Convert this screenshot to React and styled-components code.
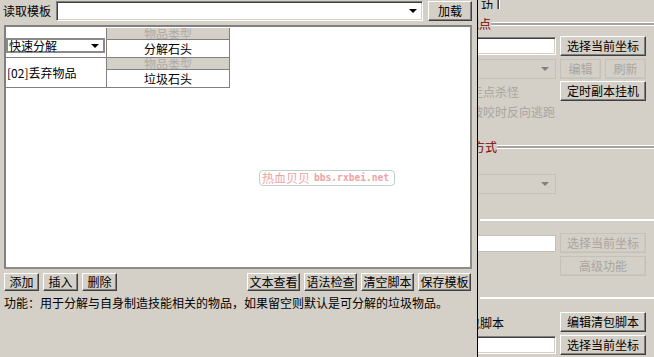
import React from 'react';
import styled, { createGlobalStyle, css } from 'styled-components';

const GlobalStyle = createGlobalStyle`
  html, body {
    margin: 0;
    padding: 0;
    background: #d4d0c8;
  }
  body {
    font-family: "Noto Sans CJK SC", "Noto Sans", sans-serif;
    font-size: 12px;
    color: #000;
  }
`;

const raised = css`
  box-sizing: border-box;
  background: #d4d0c8;
  border: 1px solid;
  border-color: #fff #404040 #404040 #fff;
  box-shadow: inset -1px -1px #808080;
`;

const sunken = css`
  box-sizing: border-box;
  background: #fff;
  border: 1px solid;
  border-color: #808080 #fff #fff #808080;
  box-shadow: inset 1px 1px #404040, inset -1px -1px #d4d0c8;
`;

const Screen = styled.div`
  display: flex;
  width: 654px;
  height: 357px;
  overflow: hidden;
  background: #d4d0c8;
`;

/* ---------- dialog ---------- */

const Dialog = styled.div`
  flex: none;
  width: 477px;
  height: 357px;
  border-right: 1px solid #000;
  display: flex;
  flex-direction: column;
`;

const TopRow = styled.div`
  display: flex;
  align-items: center;
  height: 20px;
  margin-top: 1px;
`;

const Label = styled.span`
  margin-left: 3px;
  width: 48px;
  line-height: 12px;
  white-space: nowrap;
`;

const Combo = styled.div`
  ${sunken};
  margin-left: 5px;
  width: 367px;
  height: 20px;
  display: flex;
  align-items: center;
  justify-content: flex-end;
  padding-right: 5px;
`;

const Arrow = styled.span`
  width: 0;
  height: 0;
  border-left: 4px solid transparent;
  border-right: 4px solid transparent;
  border-top: 4px solid ${p => p.$color || '#000'};
`;

const Button = styled.button`
  ${raised};
  flex: none;
  width: ${p => p.$w}px;
  height: ${p => p.$h || 20}px;
  margin: 0;
  padding: 0;
  font: inherit;
  line-height: 12px;
  color: #000;
  white-space: nowrap;
  &:disabled {
    color: #a8a5a0;
    border-color: #c4c1ba;
    box-shadow: inset -1px -1px #cbc8c1;
  }
`;

const LoadButton = styled(Button)`
  margin-left: 5px;
`;

const ListBox = styled.div`
  box-sizing: border-box;
  position: relative;
  margin: 4px 0 0 4px;
  width: 468px;
  height: 244px;
  border: 2px solid;
  border-color: #808080 #8c8c8c #8c8c8c #808080;
  background: #fff;
  overflow: hidden;
`;

const Grid = styled.div`
  width: 224px;
  margin-top: 1px;
`;

const GridRow = styled.div`
  display: flex;
  height: 29px;
  border-bottom: 1px solid #808080;
`;

const ActionCell = styled.div`
  box-sizing: border-box;
  width: 101px;
  border-right: 1px solid #808080;
  padding-top: ${p => p.$pt}px;
  padding-left: ${p => p.$pl || 0}px;
  line-height: 12px;
  white-space: nowrap;
`;

const CellCombo = styled.div`
  box-sizing: border-box;
  width: 99px;
  height: 15px;
  border: 2px solid #8a8a8a;
  display: flex;
  align-items: center;
  justify-content: space-between;
  padding: 0 4px 0 1px;
  line-height: 11px;
  white-space: nowrap;
`;

const TypeCell = styled.div`
  box-sizing: border-box;
  width: 123px;
  border-right: 1px solid #808080;
  display: flex;
  flex-direction: column;
`;

const TypeHeader = styled.div`
  height: 11px;
  line-height: 11px;
  background: #d4d0c8;
  color: #aeaba5;
  text-align: center;
  overflow: hidden;
  border-bottom: 1px solid #808080;
`;

const TypeValue = styled.div`
  height: 17px;
  line-height: 17px;
  text-align: center;
`;

const Watermark = styled.div`
  position: absolute;
  left: 253px;
  top: 143px;
  box-sizing: border-box;
  width: 136px;
  height: 16px;
  border: 1px solid #bfcfcb;
  border-radius: 4px;
  display: flex;
  align-items: center;
  gap: 4px;
  padding-left: 2px;
  color: #f0a3a5;
  line-height: 12px;
  white-space: nowrap;
`;

const WatermarkUrl = styled.span`
  font-family: "DejaVu Sans Mono", "Liberation Mono", monospace;
  font-size: 9.6px;
  font-weight: bold;
`;

const ButtonRow = styled.div`
  display: flex;
  align-items: center;
  gap: 4px;
  margin: 4px 0 0 4px;
  height: 18px;
  padding-right: 6px;
`;

const Spacer = styled.div`
  flex: 1;
`;

const Note = styled.div`
  margin: 6px 0 0 4px;
  line-height: 12px;
  white-space: nowrap;
`;

/* ---------- background window ---------- */

const Back = styled.div`
  flex: none;
  width: 176px;
  height: 357px;
  overflow: hidden;
`;

const BackInner = styled.div`
  margin-left: -80px;
  width: 256px;
  display: flex;
  flex-direction: column;
`;

const TabStrip = styled.div`
  display: flex;
  height: 9px;
  margin-left: 80px;
`;

const Tab = styled.div`
  box-sizing: border-box;
  width: 21px;
  height: 9px;
  border-right: 1px solid #404040;
  box-shadow: inset -1px 0 #808080;
  line-height: 12px;
  overflow: hidden;
  position: relative;
  > span {
    position: absolute;
    right: 5px;
    bottom: -3px;
  }
`;

const TabRest = styled.div`
  flex: 1;
  border-left: 1px solid #fff;
`;

const SectionTitle = styled.div`
  display: flex;
  align-items: center;
  height: 12px;
  margin-top: ${p => p.$mt}px;
  padding-left: ${p => p.$pl}px;
`;

const TitleText = styled.span`
  color: #800000;
  line-height: 12px;
  white-space: nowrap;
`;

const Etched = styled.div`
  flex: 1;
  box-sizing: border-box;
  height: 4px;
  margin-left: ${p => p.$ml || 0}px;
  margin-top: ${p => p.$mt || 0}px;
  border-top: 1px solid #fff;
  border-bottom: 1px solid #fff;
  background: #a6a39d;
`;

const FormRow = styled.div`
  display: flex;
  align-items: center;
  gap: 4px;
  height: 20px;
  margin-top: ${p => p.$mt}px;
`;

const FieldCol = styled.div`
  flex: none;
  width: 158px;
  display: flex;
  align-items: center;
  height: 100%;
`;

const TextBox = styled.div`
  ${sunken};
  width: 100%;
  height: ${p => p.$h || 18}px;
  ${p => p.$disabled && css`
    border-color: #c4c1ba;
    box-shadow: none;
  `}
`;

const DisabledCombo = styled.div`
  box-sizing: border-box;
  width: 100%;
  height: ${p => p.$h || 20}px;
  border: 1px solid #c4c1ba;
  display: flex;
  align-items: center;
  justify-content: flex-end;
  padding-right: 6px;
`;

const BackText = styled.span`
  margin-left: ${p => p.$ml}px;
  padding-top: ${p => p.$pt || 0}px;
  line-height: 12px;
  white-space: nowrap;
  color: ${p => (p.$disabled ? '#a8a5a0' : '#000')};
`;

const TextLine = styled.div`
  height: 12px;
  margin-top: ${p => p.$mt}px;
  display: flex;
`;

const ButtonPair = styled.div`
  display: flex;
  gap: 4px;
`;

export default function App() {
  return (
    <>
      <GlobalStyle />
      <Screen>
        <Dialog>
          <TopRow>
            <Label>读取模板</Label>
            <Combo>
              <Arrow />
            </Combo>
            <LoadButton $w={44}>加载</LoadButton>
          </TopRow>

          <ListBox>
            <Grid>
              <GridRow>
                <ActionCell $pt={10}>
                  <CellCombo>
                    <span>快速分解</span>
                    <Arrow />
                  </CellCombo>
                </ActionCell>
                <TypeCell>
                  <TypeHeader>物品类型</TypeHeader>
                  <TypeValue>分解石头</TypeValue>
                </TypeCell>
              </GridRow>
              <GridRow>
                <ActionCell $pt={9} $pl={1}>[02]丢弃物品</ActionCell>
                <TypeCell>
                  <TypeHeader>物品类型</TypeHeader>
                  <TypeValue>垃圾石头</TypeValue>
                </TypeCell>
              </GridRow>
            </Grid>
            <Watermark>
              <span>热血贝贝</span>
              <WatermarkUrl>bbs.rxbei.net</WatermarkUrl>
            </Watermark>
          </ListBox>

          <ButtonRow>
            <Button $w={35} $h={18}>添加</Button>
            <Button $w={35} $h={18}>插入</Button>
            <Button $w={35} $h={18}>删除</Button>
            <Spacer />
            <Button $w={53} $h={18}>文本查看</Button>
            <Button $w={53} $h={18}>语法检查</Button>
            <Button $w={53} $h={18}>清空脚本</Button>
            <Button $w={53} $h={18}>保存模板</Button>
          </ButtonRow>

          <Note>功能：用于分解与自身制造技能相关的物品，如果留空则默认是可分解的垃圾物品。</Note>
        </Dialog>

        <Back>
          <BackInner>
            <TabStrip>
              <Tab><span>功</span></Tab>
              <TabRest />
            </TabStrip>

            <SectionTitle $mt={9} $pl={45}>
              <TitleText>挂机地点</TitleText>
              <Etched />
            </SectionTitle>

            <FormRow $mt={6}>
              <FieldCol><TextBox /></FieldCol>
              <Button $w={86}>选择当前坐标</Button>
            </FormRow>

            <FormRow $mt={3}>
              <FieldCol>
                <DisabledCombo><Arrow $color="#808080" /></DisabledCombo>
              </FieldCol>
              <ButtonPair>
                <Button $w={41} disabled>编辑</Button>
                <Button $w={41} disabled>刷新</Button>
              </ButtonPair>
            </FormRow>

            <FormRow $mt={2}>
              <FieldCol>
                <BackText $ml={73} $pt={2} $disabled>走点杀怪</BackText>
              </FieldCol>
              <Button $w={86}>定时副本挂机</Button>
            </FormRow>

            <TextLine $mt={5}>
              <BackText $ml={73} $disabled>被咬时反向逃跑</BackText>
            </TextLine>

            <SectionTitle $mt={23} $pl={51}>
              <TitleText>挂机方式</TitleText>
              <Etched />
            </SectionTitle>

            <FormRow $mt={21}>
              <FieldCol>
                <DisabledCombo><Arrow $color="#808080" /></DisabledCombo>
              </FieldCol>
            </FormRow>

            <Etched $ml={82} $mt={25} />

            <FormRow $mt={12}>
              <FieldCol><TextBox $h={17} $disabled /></FieldCol>
              <Button $w={86} disabled>选择当前坐标</Button>
            </FormRow>

            <FormRow $mt={3}>
              <FieldCol />
              <Button $w={86} disabled>高级功能</Button>
            </FormRow>

            <Etched $ml={82} $mt={21} />

            <FormRow $mt={13}>
              <FieldCol>
                <BackText $ml={58} $pt={2}>清包脚本</BackText>
              </FieldCol>
              <Button $w={86}>编辑清包脚本</Button>
            </FormRow>

            <FormRow $mt={3}>
              <FieldCol><TextBox /></FieldCol>
              <Button $w={86}>选择当前坐标</Button>
            </FormRow>
          </BackInner>
        </Back>
      </Screen>
    </>
  );
}
